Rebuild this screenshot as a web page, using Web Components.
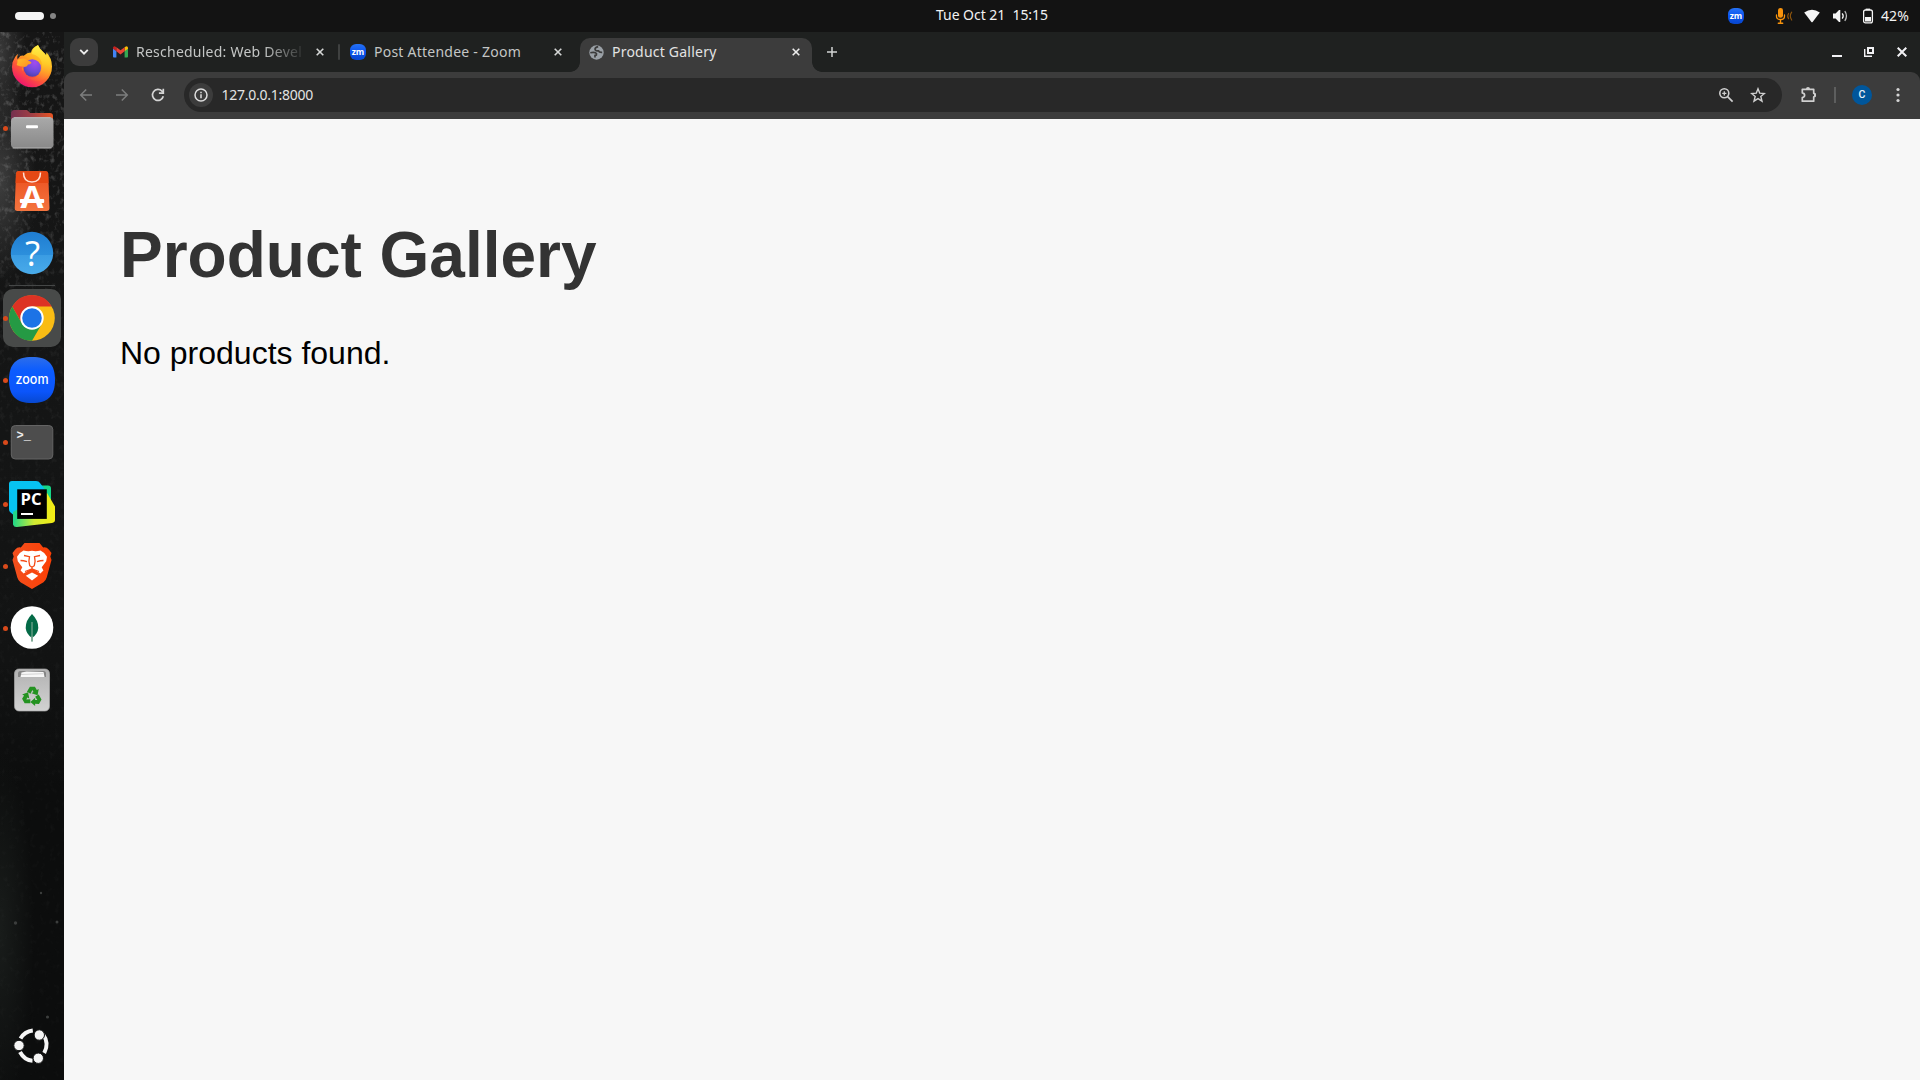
<!DOCTYPE html>
<html lang="en">
<head>
<meta charset="utf-8">
<title>Product Gallery</title>
<style>
html,body{margin:0;height:100%;overflow:hidden;background:#131313}
body{font-family:"Noto Sans",sans-serif}
</style>
</head>
<body>
<desk-shell></desk-shell>
<script>
const define = (name, html, ready) => {
  const t = document.createElement('template');
  t.innerHTML = html;
  customElements.define(name, class extends HTMLElement {
    constructor() {
      super();
      this.attachShadow({mode: 'open'}).appendChild(t.content.cloneNode(true));
    }
    connectedCallback() { if (ready) ready.call(this); }
  });
};

/* A single line label whose tracking is adjusted to a given width. */
define('ui-label', `
<style>
:host{display:block;height:20px;line-height:20px;font-size:14px;flex:none}
span{display:block;width:max-content;white-space:pre}
</style><span><slot></slot></span>`, function () {
  const want = +this.getAttribute('w');
  const n = this.textContent.length;
  const s = this.shadowRoot.querySelector('span');
  this.style.width = want + 'px';
  const have = s.getBoundingClientRect().width;
  if (have) s.style.letterSpacing = ((want - have) / n).toFixed(3) + 'px';
});

define('zm-badge', `
<style>:host{display:block;width:16px;height:16px;flex:none}svg{display:block}</style>
<svg width="16" height="16" viewBox="0 0 16 16">
<defs><linearGradient id="g" x1="0" y1="0" x2="0" y2="1"><stop offset="0" stop-color="#2672f5"/><stop offset=".5" stop-color="#0b54f0"/><stop offset="1" stop-color="#0846cc"/></linearGradient></defs>
<rect width="16" height="16" rx="6.2" fill="url(#g)"/>
<text x="8" y="10.500" text-anchor="middle" textLength="12.600" lengthAdjust="spacingAndGlyphs" font-family="Open Sans,sans-serif" font-weight="700" font-size="8.500" fill="#fff">zm</text></svg>`);

define('top-bar', `
<style>
:host{display:grid;grid-template-columns:1fr auto 1fr;align-items:center;height:32px;background:#131313;color:#f2f2f2}
.left{display:flex;align-items:center;gap:6px;padding-left:15px}
.pill{width:29px;height:8px;border-radius:4px;background:#f5f5f5}
.dot{width:6px;height:6px;border-radius:3px;background:#858585}
.clock{padding-left:64px;padding-bottom:2px}
.tray{display:flex;align-items:center;justify-content:flex-end;padding-right:11px}
svg{display:block;flex:none}
.tray ui-label{margin-left:6px;padding-bottom:1px}
</style>
<div class="left"><div class="pill"></div><div class="dot"></div></div>
<div class="clock"><ui-label w="112">Tue Oct 21  15:15</ui-label></div>
<div class="tray">
<zm-badge></zm-badge>
<svg style="margin-left:31px" width="18" height="18" viewBox="0 0 18 18" fill="none" stroke="#f8930c" stroke-linecap="round"><rect x="3" y="1" width="5" height="9.800" rx="2.300" fill="#f8930c" stroke="none"/><path d="M1.500 8v1.200q0 3.300 4 3.300t4-3.300V8" stroke-width="1.300"/><path d="M5.500 12.800v3.200M3.300 16.300h4.400" stroke-width="1.400"/><path d="M13.600 6.500q-1.800 2.600 0 5.200M16.700 5.200q-2.800 3.900 0 7.800" stroke="#8b540e" stroke-width="1.200"/></svg>
<svg style="margin-left:10px" width="18" height="16" viewBox="0 0 18 16"><path d="M1.200 4.600Q9 -1.200 16.800 4.600L9.600 14q-.6.7-1.200 0Z" fill="#f5f5f5"/></svg>
<svg style="margin-left:11px" width="18" height="16" viewBox="0 0 18 16" fill="none" stroke="#f5f5f5" stroke-width="1.3"><path d="M1 5.400h2.600L7 2h1.300v12H7L3.600 10.600H1Z" fill="#f5f5f5" stroke="none"/><path d="M10.200 5.400q2 2.600 0 5.200" /><path d="M12.800 3.200q3.300 4.800 0 9.600" stroke="#bdbdbd"/></svg>
<svg style="margin-left:13px" width="12" height="16" viewBox="0 0 12 16"><path d="M2.700 2.200V.6h4.400v1.600" fill="#f5f5f5"/><rect x=".6" y="2" width="8.800" height="12.900" rx="1.900" fill="none" stroke="#f5f5f5" stroke-width="1.300"/><rect x="2" y="9" width="6" height="4.500" fill="#f5f5f5"/></svg>
<ui-label w="28">42%</ui-label>
</div>`);

/* ---------- dock ---------- */
define('dock-item', `
<style>
:host{display:block;position:relative;width:64px;height:62px;flex:none}
:host([running])::before{content:"";position:absolute;left:3px;top:28.500px;width:5px;height:5px;border-radius:50%;background:#d94a1b;z-index:1}
:host([active])::after{content:"";position:absolute;left:3px;top:2px;width:58px;height:58px;border-radius:10px;background:#484a49;z-index:-1}
:host([active]){isolation:isolate}
</style><slot></slot>`);

define('app-dock', `
<style>
:host{display:flex;flex-direction:column;width:64px;height:1048px;box-sizing:border-box;padding:3px 0 3px;position:relative;overflow:hidden;isolation:isolate;
background:
radial-gradient(ellipse 26px 80px at 0 20px,#484848b0,#48484800),
radial-gradient(ellipse 36px 100px at 0 150px,#505050b0,#50505000),
radial-gradient(ellipse 34px 180px at 0 900px,#1c201ecc,#1c201e00),
linear-gradient(#161616,#141515 40%,#121313 60%,#0c0d0d 72%,#0c0d0d)}
.grain{position:absolute;left:0;top:0;z-index:-1}
.rule{height:4px;flex:none;display:flex;align-items:center;justify-content:center}
.rule::after{content:"";width:46px;height:1px;background:#454747}
.end{margin-top:auto}
svg{display:block}
</style>
<svg class="grain" width="64" height="1048"><defs>
<filter id="n" x="0" y="0" width="1" height="1"><feTurbulence type="fractalNoise" baseFrequency=".2 .16" numOctaves="3" seed="8"/><feColorMatrix values="0 0 0 0 .45  0 0 0 0 .45  0 0 0 0 .45  2.600 0 0 0 -1.350"/></filter>
<linearGradient id="f" x1="0" y1="0" x2="0" y2="1"><stop offset="0" stop-color="#fff" stop-opacity=".4"/><stop offset=".17" stop-color="#fff" stop-opacity=".3"/><stop offset=".25" stop-color="#fff" stop-opacity=".12"/><stop offset=".5" stop-color="#fff" stop-opacity=".05"/><stop offset="1" stop-color="#fff" stop-opacity=".03"/></linearGradient>
<mask id="m"><rect width="64" height="1048" fill="url(#f)"/></mask></defs>
<g mask="url(#m)"><rect width="64" height="1048" filter="url(#n)"/></g>
<g fill="#3c3e3d"><circle cx="15.500" cy="891" r="1.700"/><circle cx="57" cy="890" r="1.500"/><circle cx="41" cy="861" r="1.200"/><circle cx="47.500" cy="985" r="1.600"/></g></svg>

<dock-item><svg width="64" height="62" viewBox="0 0 64 62"><defs>
<linearGradient id="fa" x1=".85" y1=".1" x2=".3" y2="1"><stop offset="0" stop-color="#ffe22f"/><stop offset=".35" stop-color="#ffae20"/><stop offset=".65" stop-color="#ff5a36"/><stop offset="1" stop-color="#ee1172"/></linearGradient>
<linearGradient id="fb" x1=".6" y1="0" x2=".5" y2="1"><stop offset="0" stop-color="#fff44a"/><stop offset=".5" stop-color="#ffc927"/><stop offset="1" stop-color="#ff7a30" stop-opacity=".2"/></linearGradient>
<radialGradient id="fc" cx=".65" cy=".2" r=".9"><stop offset="0" stop-color="#a24bf0"/><stop offset=".6" stop-color="#6a4bd8"/><stop offset="1" stop-color="#4a3c9e"/></radialGradient>
<linearGradient id="fd" x1="0" y1="0" x2="1" y2="1"><stop offset="0" stop-color="#ffc02a"/><stop offset="1" stop-color="#ff8020"/></linearGradient></defs>
<path d="M18 19q-1.200 3-.5 5.500L20.200 21q1.800-.7 3.500-.2Q27 17.500 31 17.500q.7-5 7-7.500 1.300 3.500 5.500 7.200 1.700 1.600 2.700 3.300l.2-3.200q5.600 6 5.600 14.200 0 8.600-6 14.800T32 52.300q-8 0-14-6T12 32q0-5.500 3-9.700.5-1.500 3-3.300Z" fill="url(#fa)"/>
<path d="M38 10.300q-6 3-6.300 8.700 7.800 1.500 9.800 8 1.500 6-2 11.500-4 6-11 4.500 7 5.800 15 1.500 7.500-4.500 7-14-.3-7-4-11.700l-.3 2.200q-1-2-3-3.700-4-3.500-5.200-7Z" fill="url(#fb)"/>
<circle cx="32.300" cy="33" r="8.700" fill="url(#fc)"/>
<path d="M28 25.500q-3-3.800-10.500-.7l-.2 3.500q-1 1-.3 2 2.500 1.300 7 1.500-2.500 1.700-1 4.800-2.500-3.500.5-4.600 3.500 0 4.500-2.500 4-.7 3.300-2.300-1.300-1-3.300-1.700Z" fill="url(#fd)"/></svg></dock-item>

<dock-item running><svg width="64" height="62" viewBox="0 0 64 62"><defs><linearGradient id="ga" x1="0" x2="1"><stop offset="0" stop-color="#75304f"/><stop offset=".5" stop-color="#a13f45"/><stop offset="1" stop-color="#e95522"/></linearGradient><linearGradient id="gb" x1="0" y1="0" x2="0" y2="1"><stop offset="0" stop-color="#a9a9a9"/><stop offset="1" stop-color="#898989"/></linearGradient></defs>
<path d="M11 17q0-4 3.500-4H27l3.300 3h19.500q3.200 0 3.200 3v10H11Z" fill="url(#ga)"/>
<rect x="11" y="20.300" width="42.500" height="31" rx="4" fill="url(#gb)"/><path d="M14 20.700h36.500M13 51h38.500" stroke="#c0c0c0" stroke-width=".8"/><rect x="26" y="28.200" width="12" height="3" rx="1" fill="#fff"/></svg></dock-item>

<dock-item><svg width="64" height="62" viewBox="0 0 64 62"><defs><linearGradient id="sa" x1="0" y1="0" x2="0" y2="1"><stop offset="0" stop-color="#e8501d"/><stop offset=".3" stop-color="#ed5927"/><stop offset="1" stop-color="#f4753f"/></linearGradient></defs>
<path d="M18.500 12h27q2.500 0 2.700 2.500L49.500 49q0 3-3 3h-29q-3 0-2.800-3l1.300-34.500Q16.200 12 18.500 12Z" fill="url(#sa)"/><path d="M18.500 12h27q2.500 0 2.700 2.500l.3 9.500H15.600l.4-9.500Q16.200 12 18.500 12Z" fill="#e54814"/><path d="M23.500 13.500q0 9.500 8.500 9.500t8.500-9.500" fill="none" stroke="#ffe0d3" stroke-width="1.500"/>
<text x="32" y="48.500" text-anchor="middle" textLength="23" lengthAdjust="spacingAndGlyphs" font-family="Open Sans,sans-serif" font-weight="700" font-size="30" fill="#fff">A</text><rect x="19.800" y="40" width="24.400" height="4" rx="1" fill="#fff"/></svg></dock-item>

<dock-item><svg width="64" height="62" viewBox="0 0 64 62"><defs><linearGradient id="ha" x1="0" y1="0" x2="0" y2="1"><stop offset="0" stop-color="#1f7dd2"/><stop offset=".54" stop-color="#2c8fdc"/><stop offset=".55" stop-color="#3a9ce3"/><stop offset="1" stop-color="#49abea"/></linearGradient></defs>
<circle cx="32" cy="32" r="21.200" fill="url(#ha)"/><text x="32.500" y="45.300" text-anchor="middle" font-family="Open Sans,sans-serif" font-size="35" fill="#fff">?</text></svg></dock-item>

<div class="rule"></div>

<dock-item running active><svg width="64" height="62" viewBox="-32 -31 64 62">
<circle r="22.800" fill="#f9bc14"/><path d="M0-11.400H19.800A22.800 22.800 0 0 0-19.800-11.400L-9.900 5.700Z" fill="#dd3224"/><path d="M-19.800-11.400A22.800 22.800 0 0 0 0 22.800L9.900 5.700Q0 14-9.900 5.700Z" fill="#259a44"/><circle r="11.700" fill="#fff"/><circle r="9.800" fill="#1c73e6"/></svg></dock-item>

<dock-item running><svg width="64" height="62" viewBox="0 0 64 62"><defs><linearGradient id="za" x1="0" y1="0" x2="0" y2="1"><stop offset="0" stop-color="#2d6eea"/><stop offset=".3" stop-color="#0b5cff"/><stop offset=".75" stop-color="#0b55fb"/><stop offset="1" stop-color="#0748d0"/></linearGradient></defs>
<path d="M32 8C48 8 55 15 55 31S48 54 32 54 9 47 9 31 16 8 32 8Z" fill="url(#za)"/><text x="32" y="34.800" text-anchor="middle" textLength="33" lengthAdjust="spacingAndGlyphs" font-family="Inter,sans-serif" font-weight="500" font-size="13.500" fill="#fff">zoom</text></svg></dock-item>

<dock-item running><svg width="64" height="62" viewBox="0 0 64 62"><rect x="11.300" y="14.500" width="41.500" height="33.500" rx="4" fill="#4d4d4d" stroke="#646464"/><text x="16.500" y="28" font-family="Liberation Mono,monospace" font-weight="700" font-size="12" fill="#eee">&gt;_</text></svg></dock-item>

<dock-item running><svg width="64" height="62" viewBox="0 0 64 62"><defs><linearGradient id="pb" x1="0" x2="1"><stop offset="0" stop-color="#1fd886"/><stop offset=".5" stop-color="#cfea34"/><stop offset="1" stop-color="#f5ec13"/></linearGradient></defs>
<path d="M38 12.500h10q3 0 3 3V32H38Z" fill="#16d789"/><path d="M13 38V51.500Q14 54.500 17 54L52 50q3-.7 3-3V33.500L47 20Z" fill="url(#pb)"/><path d="M12 8h24q3 0 4 2l6 8L17 45l-7-6q-1-1-1-3V11q0-3 3-3Z" fill="#07c3f2"/><path d="M13 39l5-3v10l-5 2Z" fill="#21d789"/>
<rect x="17.200" y="16.300" width="29.600" height="29.600" fill="#000"/><text x="20.500" y="31.500" textLength="21" lengthAdjust="spacingAndGlyphs" font-family="Open Sans,sans-serif" font-weight="700" font-size="15.500" fill="#fff">PC</text><rect x="21" y="40" width="12" height="2" fill="#fff"/></svg></dock-item>

<dock-item running><svg width="64" height="62" viewBox="0 0 64 62"><defs><linearGradient id="ba" x1="0" x2="1"><stop offset="0" stop-color="#f3501e"/><stop offset="1" stop-color="#fb3f05"/></linearGradient></defs>
<path d="M24.500 8h15l3.700 4.500q3-.8 5.800 2.300l2.500 3.300-1.200 3.500 1.200 3.400-4.800 17.500q-.8 2.800-3.200 4.700L32 54l-11.500-6.800q-2.400-1.900-3.200-4.700L12.500 25l1.200-3.400-1.200-3.500 2.500-3.300q2.800-3.100 5.800-2.300Z" fill="url(#ba)"/>
<path d="M23.500 15.500q4.500 1.200 8.500.3 4 .9 8.500-.3 3.500 1.500 6.500 6.200l-.8 4.500-4.500 6 1.700 3.300-3 3-5-3.200-3.400-1.500-3.400 1.500-5 3.200-3-3 1.700-3.300-4.500-6-.8-4.500q3-4.700 6.500-6.200Z" fill="#fff"/><path d="M24 20.500l5.500 1.200-.6 4.500.8 4.500 2.300 1.600 2.300-1.600.8-4.500-.6-4.500 5.500-1.200M20.500 25.500q3 0 6.500 1.200M43.500 25.500q-3 0-6.500 1.200M32 32.500v2M25 36.500l7-2.500 7 2.500" fill="none" stroke="#f54b18" stroke-width="1.300"/><path d="M25.800 40.700l6.200-3.200 6.200 3.200L32 45.500Z" fill="#fff"/></svg></dock-item>

<dock-item running><svg width="64" height="62" viewBox="0 0 64 62"><circle cx="32" cy="30.500" r="21.300" fill="#fff"/><path d="M32 17q6.500 6.500 6.300 14-.6 6-5.800 9.500h-1q-5.200-3.500-5.800-9.500Q25.500 23.500 32 17Z" fill="#046a47"/><path d="M32 25v19.500" stroke="#8fb3a0" stroke-width="1"/><path d="M32 39v5.500" stroke="#6b9d86" stroke-width="1.500"/></svg></dock-item>

<dock-item><svg width="64" height="62" viewBox="0 0 64 62"><defs><linearGradient id="ta" x1="0" y1="0" x2="0" y2="1"><stop offset="0" stop-color="#b2b2b2"/><stop offset="1" stop-color="#d2d2d2"/></linearGradient>
<g id="ra"><path d="M-4.500-4.300L-1.900-8.700H2.600L4.300-5.700 6-6.700 5-1.200-.4-3 1.300-4 .3-5.700-1.300-2.500Z"/></g></defs>
<rect x="14.500" y="10" width="35" height="42" rx="4.500" fill="url(#ta)" stroke="#a9a9a9" stroke-width=".7"/><path d="M18 18v-3.500q0-2.500 2.500-2.500h23q2.500 0 2.500 2.500V18Z" fill="#858585"/><path d="M20.500 18l1-4.500 5-1 17 .5 1 5Z" fill="#f7f7f7"/><path d="M21 15.500l22-.8" stroke="#bbb" stroke-width=".6"/>
<g fill="#249321"><g transform="translate(32 37.500) scale(1.120)"><use href="#ra"/><use href="#ra" transform="rotate(120)"/><use href="#ra" transform="rotate(240)"/></g></g></svg></dock-item>

<dock-item class="end"><svg width="64" height="62" viewBox="0 0 64 62"><g fill="none" stroke="#f5f5f5" stroke-width="4"><path d="M20.500 23.500q4-7 12.300-8M43 19.500q6.500 8.500 1.200 18.500M20 37q4.500 8.300 12.500 8.800"/></g><g fill="#f5f5f5" stroke="#101111" stroke-width="1"><circle cx="19" cy="30.500" r="5.200"/><circle cx="39.300" cy="20" r="5.200"/><circle cx="38.300" cy="43.200" r="5.200"/></g></svg></dock-item>`);

/* ---------- browser ---------- */
define('close-mark', `
<style>:host{display:block;width:8px;height:8px;flex:none}svg{display:block}</style>
<svg width="8" height="8" viewBox="0 0 8 8"><path d="M.7.7l6.600 6.600M7.300.7L.7 7.300" stroke="currentColor" stroke-width="1.600" fill="none"/></svg>`);

define('browser-tab', `
<style>
:host{display:flex;align-items:center;width:232px;height:34px;box-sizing:border-box;color:#c4c6c5;position:relative;flex:none}
.in{display:flex;align-items:center;height:28px;width:100%;align-self:flex-start}
.icon{width:32px;padding-left:8px;box-sizing:border-box;display:flex;flex:none}
.text{width:172px;flex:none;overflow:hidden}
close-mark{margin-left:8px;color:#d5d7d6}
:host([selected]){background:#3c3c3c;border-radius:10px 10px 0 0;color:#e3e3e3}
:host([selected]) close-mark{color:#ededed}
:host([selected])::before,:host([selected])::after{content:"";position:absolute;bottom:0;width:10px;height:10px;background:radial-gradient(circle at 0 0,#3c3c3c00 9.500px,#3c3c3c 10.200px);left:-10px}
:host([selected])::after{left:auto;right:-10px;background:radial-gradient(circle at 100% 0,#3c3c3c00 9.500px,#3c3c3c 10.200px)}
:host([faded]) .text{-webkit-mask-image:linear-gradient(90deg,#000 128px,#0002 165px,#0000 170px);mask-image:linear-gradient(90deg,#000 128px,#0002 165px,#0000 170px)}
</style>
<div class="in"><div class="icon"><slot name="icon"></slot></div><div class="text"><slot></slot></div><close-mark></close-mark></div>`);

define('tab-strip', `
<style>
:host{display:flex;height:40px;box-sizing:border-box;padding:6px 13px 0 6px;background:#1f2120}
svg{display:block}
.search{width:28px;height:28px;border-radius:9px;background:#3c3c3c;display:grid;place-items:center;flex:none;margin-right:6px}
.gap{width:6px;height:28px;flex:none;display:flex;align-items:center;justify-content:center}
.gap.line::after{content:"";width:2px;height:16px;background:#3f4140;border-radius:1px}
.plus{margin:9px 0 0 15px;width:10px;height:10px}
.win{margin:9px 0 0 auto;display:flex;gap:22px}
.win svg:nth-child(-n+2){margin:0 1px 0 -1px}
</style>
<div class="search"><svg width="10" height="8" viewBox="0 0 10 8"><path d="M1.200 1.800L5 5.600 8.800 1.800" fill="none" stroke="#ededed" stroke-width="1.900"/></svg></div>
<browser-tab faded><svg slot="icon" style="margin-left:1px" width="15" height="12" viewBox="0 0 15 12"><path d="M0 2v8.600q0 .9.900.9h2.500V4.700Z" fill="#4285f4"/><path d="M15 2v8.600q0 .9-.9.900h-2.500V4.700Z" fill="#34a853"/><path d="M11.600 1.200v4L15 2.800V1.700q-.5-2.400-2.600-1Z" fill="#fbbc04"/><path d="M3.400 1.200v4L0 2.800V1.700Q.5-.7 2.600.7Z" fill="#c5221f"/><path d="M3.400 1.200L7.500 4.300l4.100-3.100v4.100L7.500 8.400 3.400 5.300Z" fill="#ea4335"/></svg><ui-label w="166">Rescheduled: Web Devel</ui-label></browser-tab>
<div class="gap line"></div>
<browser-tab><zm-badge slot="icon"></zm-badge><ui-label w="147">Post Attendee - Zoom</ui-label></browser-tab>
<div class="gap"></div>
<browser-tab selected><svg slot="icon" style="margin-left:.5px" width="15" height="15" viewBox="0 0 15 15"><circle cx="7.500" cy="7.500" r="7.200" fill="#9aa0a6"/><path d="M9.200 1.600Q6 2.300 6 4.300q.1 1.400 1.900 1.500l1.600.1q.6 1.700 3.700 1.500M1.300 7.800q3.400-.9 5.200 0 1.600 1 .9 2.300l-1.400.3v2.200" fill="none" stroke="#3c3c3c" stroke-width="1.700"/></svg><ui-label w="104.500">Product Gallery</ui-label></browser-tab>
<svg class="plus" viewBox="0 0 10 10"><path d="M5 0v10M0 5h10" stroke="#d2d4d3" stroke-width="1.500"/></svg>
<div class="win">
<svg width="10" height="10" viewBox="0 0 10 10"><path d="M0 9h10" stroke="#f1f1f4" stroke-width="2"/></svg>
<svg width="10" height="10" viewBox="0 0 10 10"><rect x="4" y="1" width="5" height="5" fill="none" stroke="#f1f1f4" stroke-width="2"/><path d="M.7 2v7.300H8" fill="none" stroke="#f1f1f4" stroke-width="1.400"/></svg>
<svg width="10" height="10" viewBox="0 0 10 10"><path d="M.7.700l8.600 8.600M9.300.700L.7 9.300" stroke="#f1f1f4" stroke-width="2"/></svg>
</div>`);

define('tool-bar', `
<style>
:host{display:block;height:47px;background:#1f2120}
.row{display:flex;align-items:center;height:47px;box-sizing:border-box;padding:0 20px 1px 14px;background:#3c3c3c;border-radius:9px 9px 0 0}
svg{display:block;flex:none}
.nav{display:flex;gap:20px;width:106px;flex:none}
.box{flex:1;display:flex;align-items:center;height:34px;border-radius:17px;background:#282828;padding:0 16px 0 5px;color:#e3e3e3}
.info{width:24px;height:24px;border-radius:12px;background:#3c3c3c;display:grid;place-items:center;margin-right:8.500px}
.marks{margin-left:auto;display:flex;gap:16px}
.bar{width:2px;height:16px;background:#5d5e5e;margin-left:16px}
.me{width:20px;height:20px;border-radius:10px;background:#00569b;color:#e9f1f8;display:grid;place-items:center;font:500 10.500px/20px Roboto,sans-serif;margin-left:16px}
</style>
<div class="row">
<div class="nav">
<svg width="16" height="16" viewBox="0 0 16 16" fill="none" stroke="#7c7d7d" stroke-width="1.500"><path d="M14 8H3M8.200 2.500L2.700 8l5.500 5.500"/></svg>
<svg width="16" height="16" viewBox="0 0 16 16" fill="none" stroke="#7c7d7d" stroke-width="1.500"><path d="M2 8h11M7.800 2.500L13.300 8l-5.500 5.500"/></svg>
<svg width="16" height="16" viewBox="0 0 16 16" fill="none" stroke="#d5d5d5" stroke-width="1.700"><path d="M13.300 9.300A5.500 5.500 0 1 1 12 4.200L13 5.300"/><path d="M13.300 1.700v4.400H8.900" /></svg>
</div>
<div class="box">
<div class="info"><svg width="14" height="14" viewBox="0 0 14 14"><circle cx="7" cy="7" r="6" fill="none" stroke="#dedede" stroke-width="1.500"/><path d="M7 6.300v3.900M7 3.700v1.500" stroke="#dedede" stroke-width="1.500"/></svg></div>
<ui-label w="91.500">127.0.0.1:8000</ui-label>
<div class="marks">
<svg width="16" height="16" viewBox="0 0 16 16" fill="none" stroke="#d0d0d0" stroke-width="1.600"><circle cx="6.300" cy="6.300" r="4.500"/><path d="M9.600 9.600l5 5"/><path d="M6.300 4.200v4.200M4.200 6.300h4.200" stroke-width="1.300"/></svg>
<svg width="16" height="16" viewBox="0 0 16 16"><path d="M8 1.800l1.700 4.300 4.700.4-3.600 3 1.200 4.600L8 11.600 4 14.100l1.200-4.600-3.600-3 4.700-.4Z" fill="none" stroke="#d0d0d0" stroke-width="1.400"/></svg>
</div></div>
<svg style="margin-left:18px" width="18" height="18" viewBox="0 0 18 18"><path d="M2.300 3.300h11.400v4q1.500 0 1.500 1.800t-1.500 1.800v4.300H2.300v-3.700q2.300-.5 2.300-2.300T2.300 6.900Z" fill="none" stroke="#d0d0d0" stroke-width="1.700" stroke-linejoin="round"/><path d="M6 3a2 2 0 0 1 4 0ZM14 7a2 2 0 0 1 0 4.200Z" fill="#d0d0d0"/></svg>
<div class="bar"></div><div class="me">C</div>
<svg style="margin-left:24px" width="4" height="16" viewBox="0 0 4 16" fill="#d5d5d5"><circle cx="2" cy="2.500" r="1.600"/><circle cx="2" cy="8" r="1.600"/><circle cx="2" cy="13.500" r="1.600"/></svg>
</div>`);

define('product-gallery', `
<style>
:host{display:block;flex:1;background:#f7f7f7;padding:57px 56px;font-family:"Liberation Sans",Arial,sans-serif;font-size:32px;color:#000}
h1{font-size:64px;margin:43px 0;color:#333;line-height:73px}
p{margin:0;line-height:37px}
</style><h1>Product Gallery</h1><p><slot></slot></p>`);

define('desk-shell', `
<style>
:host{display:flex;flex-direction:column;width:1920px;height:1080px;overflow:hidden}
.main{display:flex;height:1048px}
.window{flex:1;display:flex;flex-direction:column;min-width:0}
</style>
<top-bar></top-bar>
<div class="main"><app-dock></app-dock>
<div class="window"><tab-strip></tab-strip><tool-bar></tool-bar><product-gallery>No products found.</product-gallery></div></div>`);
</script>
</body>
</html>
